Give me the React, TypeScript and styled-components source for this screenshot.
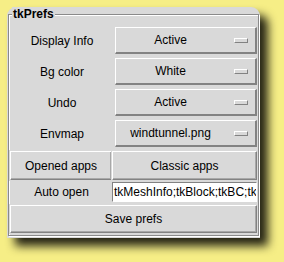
import React from "react";
import styled, { createGlobalStyle } from "styled-components";

const Global = createGlobalStyle`
  html, body { margin: 0; padding: 0; background: #f6ee86; }
  body { font-family: "Liberation Sans", Arial, sans-serif; font-size: 12px; color: #000; }
  * { box-sizing: border-box; }
`;

const Page = styled.div`
  width: 284px;
  height: 262px;
  padding: 7px 0 0 7px;
  overflow: hidden;
`;

const Panel = styled.div`
  width: 253px;
  height: 231px;
  background: #d9d9d9;
  border-radius: 9px 9px 0 0;
  box-shadow: 8px 8px 10px rgba(0, 0, 0, 0.85);
  padding: 7px 1px 2px 1px;
`;

const Frame = styled.div`
  position: relative;
  height: 222px;
  border: 1px solid #8a8a8a;
  box-shadow: inset 1px 1px 0 #ffffff, 1px 1px 0 #ffffff;
  padding: 12px 1px 1px 1px;
  display: flex;
  flex-direction: column;
`;

const Legend = styled.div`
  position: absolute;
  left: 3px;
  top: -8px;
  padding: 0 1px;
  background: #d9d9d9;
  font-weight: bold;
  font-size: 12px;
  line-height: 14px;
`;

const Rows = styled.div`
  display: flex;
  flex-direction: column;
  gap: 4px;
`;

const Row = styled.div`
  display: flex;
  height: 27px;
  align-items: stretch;
`;

const Label = styled.div<{ $w?: number }>`
  width: ${(p) => p.$w ?? 104}px;
  display: flex;
  align-items: center;
  justify-content: center;
  white-space: nowrap;
`;

const MenuButton = styled.div`
  flex: 1;
  margin-left: 1px;
  display: flex;
  align-items: center;
  border-top: 1px solid #ffffff;
  border-left: 1px solid #ffffff;
  border-bottom: 2px solid #828282;
  border-right: 2px solid #828282;
  padding: 0 7px 0 0;
`;

const MenuText = styled.span`
  flex: 1;
  text-align: center;
  white-space: nowrap;
  overflow: hidden;
`;

const Indicator = styled.span`
  width: 14px;
  height: 5px;
  margin-left: 9px;
  background: #d9d9d9;
  border-top: 1px solid #ffffff;
  border-left: 1px solid #ffffff;
  border-bottom: 1px solid #828282;
  border-right: 1px solid #828282;
`;

const ButtonRow = styled.div`
  display: flex;
  height: 29px;
  margin-top: 4px;
`;

const Button = styled.div<{ $w?: number }>`
  ${(p) => (p.$w ? `width: ${p.$w}px;` : "flex: 1;")}
  display: flex;
  align-items: center;
  justify-content: center;
  white-space: nowrap;
  border-top: 1px solid #ffffff;
  border-left: 1px solid #ffffff;
  border-bottom: 1px solid #828282;
  border-right: 1px solid #828282;
  box-shadow: inset -1px -1px 0 #a8a8a8;
  outline: 1px solid #d9d9d9;
`;

const EntryRow = styled.div`
  display: flex;
  height: 20px;
  margin-top: 2px;
`;

const Entry = styled.div`
  flex: 1;
  margin-left: -1px;
  background: #ffffff;
  border-top: 1px solid #828282;
  border-left: 1px solid #828282;
  border-bottom: 1px solid #ffffff;
  border-right: 1px solid #ffffff;
  padding: 0 0 0 1px;
  line-height: 18px;
  white-space: nowrap;
  overflow: hidden;
`;

const SaveRow = styled.div`
  display: flex;
  height: 28px;
  margin-top: 3px;
`;

const menus = [
  { label: "Display Info", value: "Active" },
  { label: "Bg color", value: "White" },
  { label: "Undo", value: "Active" },
  { label: "Envmap", value: "windtunnel.png" },
];

export default function App() {
  return (
    <Page>
      <Global />
      <Panel>
        <Frame>
          <Legend>tkPrefs</Legend>
          <Rows>
            {menus.map((m) => (
              <Row key={m.label}>
                <Label>{m.label}</Label>
                <MenuButton>
                  <MenuText>{m.value}</MenuText>
                  <Indicator />
                </MenuButton>
              </Row>
            ))}
          </Rows>
          <ButtonRow>
            <Button $w={102}>Opened apps</Button>
            <Button>Classic apps</Button>
          </ButtonRow>
          <EntryRow>
            <Label $w={103}>Auto open</Label>
            <Entry>tkMeshInfo;tkBlock;tkBC;tkMeshInfo</Entry>
          </EntryRow>
          <SaveRow>
            <Button>Save prefs</Button>
          </SaveRow>
        </Frame>
      </Panel>
    </Page>
  );
}
